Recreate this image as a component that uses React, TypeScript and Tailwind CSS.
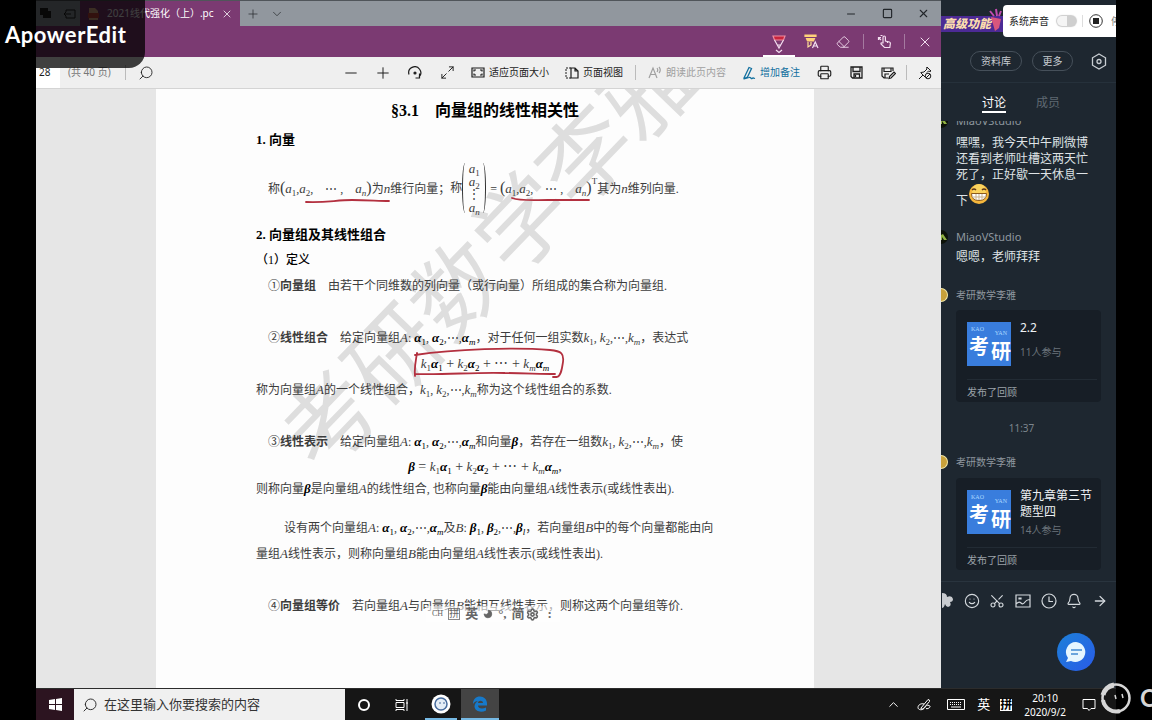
import type { ReactNode } from 'react'
import {
    ArrowRight,
    Bell,
    ChevronDown,
    ChevronUp,
    Clock,
    Eraser,
    Image,
    Maximize2,
    Minus,
    Moon,
    Plus,
    Pointer,
    Printer,
    RotateCw,
    Save,
    Scissors,
    Search,
    Settings,
    Smile,
    Square,
    X,
} from 'lucide-react'

/* Math helpers */
function V({ children, sub, bold }: { children: ReactNode; sub?: string; bold?: boolean }) {
    return (
        <span className={bold ? 'text-[13px] font-bold text-black' : 'text-[13px]'}>
            <i>{children}</i>
            {sub && (
                <sub className="bottom-[-3px] text-[9px] font-normal">{sub === 'm' || sub === 'n' || sub === 'l' ? <i>{sub}</i> : sub}</sub>
            )}
        </span>
    )
}

function Series({ name, last = 'm', bold }: { name: string; last?: string; bold?: boolean }) {
    return (
        <span className="font-[Liberation_Serif,serif]">
            <V sub="1" bold={bold}>{name}</V>, <V sub="2" bold={bold}>{name}</V>,⋯,<V sub={last} bold={bold}>{name}</V>
        </span>
    )
}

function Combination() {
    return (
        <span className="font-[Liberation_Serif,serif]">
            <V sub="1">k</V><V sub="1" bold>α</V> + <V sub="2">k</V><V sub="2" bold>α</V> + ⋯ + <V sub="m">k</V><V sub="m" bold>α</V>
        </span>
    )
}

function RowVector() {
    return (
        <span className="font-[Liberation_Serif,serif]">
            <span className="text-base">(</span>
            <V sub="1">a</V>,<V sub="2">a</V>,&emsp;⋯ ,&emsp;<V sub="n">a</V>
            <span className="text-base">)</span>
        </span>
    )
}

function TitleBar() {
    return (
        <div className="flex h-[26px] items-stretch border-t border-[#50555a] bg-[#91979e] text-[#22262a]">
            <div className="flex w-11 items-center gap-3 pl-1">
                <svg width="11" height="11" viewBox="0 0 11 11"><path d="M0 0h8v3h3v7H3V7H0z" fill="#222" /></svg>
                <svg width="13" height="10" viewBox="0 0 13 10" fill="none" stroke="#222"><path d="M3 3V1h9v8H3V7M1 5h7M3 3L1 5l2 2" /></svg>
            </div>
            <div className="flex w-[160px] items-center gap-2 bg-[#7b3a72] pl-2 text-white">
                <svg width="11" height="12" viewBox="0 0 11 12"><path d="M1 0h6l3 3v9H1z" fill="#e8b38d" /><path d="M0 5h11v5H0z" fill="#c5443a" /></svg>
                <span className="w-[110px] text-[10px] whitespace-nowrap">2021线代强化（上）.pc</span>
                <button aria-label="关闭标签页" className="-ml-1"><X size={12} strokeWidth={1.5} /></button>
            </div>
            <button aria-label="新建标签页" className="px-1.5"><Plus size={14} strokeWidth={1.2} /></button>
            <button aria-label="标签页菜单" className="px-1"><ChevronDown size={14} strokeWidth={1.2} /></button>
            <div className="ml-auto flex">
                <button aria-label="最小化" className="flex w-9 items-center justify-center"><Minus size={12} strokeWidth={2} /></button>
                <button aria-label="最大化" className="flex w-9 items-center justify-center"><Square size={11} strokeWidth={2.5} /></button>
                <button aria-label="关闭" className="flex w-9 items-center justify-center"><X size={13} strokeWidth={2} /></button>
            </div>
        </div>
    )
}

function InkBar() {
    return (
        <div className="flex h-[31px] items-stretch justify-end bg-[#7b3a72] text-[#f3dff0]">
            <button aria-label="笔" className="flex w-8 flex-col items-center justify-end border-b-2 border-white">
                <svg width="14" height="20" viewBox="0 0 14 20" fill="none" stroke="currentColor" strokeWidth="1.2">
                    <path d="M1 1h12l-1.500 4h-9z" fill="#c8243c" stroke="#ef8ba0" />
                    <path d="M2.500 5L7 13l4.500-8M5.500 10h3M4 15l3 2.500L10 15" />
                </svg>
            </button>
            <button aria-label="荧光笔" className="flex w-8 items-center justify-center">
                <svg width="15" height="15" viewBox="0 0 15 15" fill="none" stroke="currentColor" strokeWidth="1.200">
                    <path d="M1 1h11v1.500H1zM2.500 4.500h8l-1 2.500h-6z" fill="#ffd27a" stroke="#ffd27a" />
                    <path d="M4 8v5l3-2V8" stroke="#ffdf9a" />
                    <path d="M8.500 14l2.750-6L14 14M9.500 12h3.500" />
                </svg>
            </button>
            <button aria-label="橡皮擦" className="flex w-8 items-center justify-center"><Eraser size={14} strokeWidth={1.5} /></button>
            <span className="mx-1 my-2 w-px bg-[#a57aa0]" />
            <button aria-label="触摸书写" className="flex w-8 items-center justify-center">
                <svg width="15" height="15" viewBox="0 0 15 15" fill="none" stroke="currentColor" strokeWidth="1.200">
                    <path d="M6 9V3.500q0-1.500 1.200-1.500t1.200 1.500V7l4 1q1 .3 1 1.300l-.6 4.200H7.500L4 10q-.3-1.500 1-1zM10.500 7v2M4 6L1.500 3.500M1.500 6V3.500H4M3.500 1.500h2" />
                </svg>
            </button>
            <span className="mx-1 my-2 w-px bg-[#a57aa0]" />
            <button aria-label="退出书写" className="flex w-8 items-center justify-center"><X size={16} strokeWidth={1.5} /></button>
        </div>
    )
}

const iconButton = 'flex w-8 items-center justify-center'

function PdfToolbar() {
    return (
        <div className="flex h-8 items-stretch border-b border-[#d4d4d4] bg-[#efefef] text-[10px] whitespace-nowrap text-[#1c1c1c]">
            <input aria-label="页码" defaultValue="28" className="w-6 bg-white pl-[3px] text-[10px]" />
            <span className="self-center pl-2 text-[10px] text-[#777]">(共 40 页)</span>
            <span className="my-2 ml-3.5 w-px bg-[#bbb]" />
            <button aria-label="查找" className={iconButton + ' ml-1'}><Search size={16} strokeWidth={1.3} className="-scale-x-100" /></button>
            <div className="ml-auto flex items-stretch">
                <button aria-label="缩小" className={iconButton}><Minus size={18} strokeWidth={1.3} /></button>
                <button aria-label="放大" className={iconButton}><Plus size={18} strokeWidth={1.3} /></button>
                <button aria-label="旋转" className={iconButton}>
                    <svg width="14" height="14" viewBox="0 0 14 14" fill="none" stroke="currentColor" strokeWidth="1.200">
                        <path d="M1 8.500A6 6 0 1 1 11 11M11.500 7.500V12H7.500" /><circle cx="7" cy="7" r="1" fill="currentColor" />
                    </svg>
                </button>
                <button aria-label="全屏" className={iconButton}><Maximize2 size={15} strokeWidth={1.5} /></button>
                <button className="flex items-center gap-1 px-2">
                    <svg width="14" height="11" viewBox="0 0 14 11" fill="none" stroke="currentColor" strokeWidth="1.200">
                        <path d="M1 1h12v9H1zM3 4.500V3h2M9 3h2v1.500M11 6.500V8H9M5 8H3V6.500" />
                    </svg>
                    适应页面大小
                </button>
                <button className="flex items-center gap-1 px-2">
                    <svg width="14" height="12" viewBox="0 0 14 12" fill="none" stroke="currentColor" strokeWidth="1.200">
                        <path d="M6 1H1v10h5" strokeDasharray="2 1" strokeWidth="1" /><path d="M6 1h4l3 3v7H6zM10 1v3h3" />
                    </svg>
                    页面视图
                </button>
                <span className="mx-1 my-2 w-px bg-[#bbb]" />
                <button className="flex items-center gap-1 px-2 text-[#a0a0a0]">
                    <svg width="14" height="13" viewBox="0 0 14 13" fill="none" stroke="currentColor" strokeWidth="1.200">
                        <path d="M1 12L5 2l4 10M2.500 8.500h5M9 2q1.500 2 0 4M11 1q2.500 3 0 6" />
                    </svg>
                    朗读此页内容
                </button>
                <button className="flex items-center gap-1 px-2 text-[#12709f]">
                    <svg width="14" height="14" viewBox="0 0 14 14" fill="none" stroke="currentColor" strokeWidth="1.300">
                        <path d="M2 12L7 1.500l2.500 1L5.500 11 2 12.500zM2 13l5-1.500c2-1 2 2 3 1s1.500-.5 3 0" />
                    </svg>
                    增加备注
                </button>
                <button aria-label="打印" className={iconButton}><Printer size={15} strokeWidth={1.8} /></button>
                <button aria-label="保存" className={iconButton}>
                    <svg width="13" height="13" viewBox="0 0 13 13" fill="none" stroke="currentColor" strokeWidth="1.300">
                        <path d="M1 1h11v11H2.500L1 10.500zM3 1v4.500h7V1M4 12V8h5.500v4M5.500 9v2" />
                    </svg>
                </button>
                <button aria-label="另存为" className={iconButton}>
                    <svg width="15" height="14" viewBox="0 0 15 14" fill="none" stroke="currentColor" strokeWidth="1.200">
                        <path d="M7 12H3L1 10V2h11v3M3 2v3.500h7V2M4 12V8h4M8 12.500l.5-2L13 6l1.500 1.500-4.500 4.500z" />
                    </svg>
                </button>
                <span className="mx-0.5 my-2 w-px bg-[#bbb]" />
                <button aria-label="固定工具栏" className="flex w-8 items-center justify-center">
                    <svg width="14" height="14" viewBox="0 0 14 14" fill="none" stroke="currentColor">
                        <path d="M1 13l4-4M2.500 6.500L7 11M3 6.500l3-.5 3-3-.5-1.500L9 1l4 4-1 .5-1.500-.5L9 6.500" /><circle cx="10" cy="10" r="2.800" /><path d="M8 12l4-4" />
                    </svg>
                </button>
            </div>
        </div>
    )
}

function InputMethodBar() {
    return (
        <div className="absolute top-[517px] left-[270px] flex h-4 w-[134px] items-center gap-[5px] bg-white/60 pl-1.5 text-[13px] font-bold text-[#666]">
            <span className="text-[8px] font-normal">CH</span>
            <span className="border border-[#888] text-[10px] leading-none font-normal">拼</span>
            英
            <Moon size={10} fill="currentColor" className="-scale-x-100" />
            <span>°,</span>
            简
            <Settings size={13} strokeWidth={3} className="-ml-1" />
            <span className="pl-1">:</span>
        </div>
    )
}

function DocumentPage() {
    return (
        <div className="relative ml-[120px] flex-1 overflow-hidden bg-[#fdfdfd] pr-[100px] pl-[100px] font-[Liberation_Serif,Noto_Sans_CJK_SC,serif] text-xs whitespace-nowrap text-[#3c3c3c]">
            <div className="absolute top-[162px] left-1/2 -translate-x-1/2 -translate-y-1/2 -rotate-46 font-[Noto_Sans_CJK_SC,sans-serif] text-[92px] leading-none text-[#dedede]">
                考研数学李雅
            </div>
            <div className="relative">
                <h1 className="pt-2.5 text-center text-base leading-6 font-bold text-black">§3.1　向量组的线性相关性</h1>
                <h2 className="mt-[5px] text-[13px] leading-6 font-bold text-black">1. 向量</h2>
                <div className="flex h-[71px] items-center pl-3">
                    <span>称<RowVector />为<V>n</V>维行向量；</span>
                    <span>称</span>
                    <span className="h-[50px] w-1.5 rounded-[50%] border-l border-[#333]" />
                    <span className="flex flex-col items-center text-center leading-[13px]">
                        <V sub="1">a</V>
                        <V sub="2">a</V>
                        <span>⋮</span>
                        <V sub="n">a</V>
                    </span>
                    <span className="h-[50px] w-1.5 rounded-[50%] border-r border-[#333]" />
                    <span className="pl-1">=&nbsp;<RowVector /><sup className="top-[-9px] text-[9px]">T</sup>其为<V>n</V>维列向量.</span>
                </div>
                <h2 className="text-[13px] leading-6 font-bold text-black">2. 向量组及其线性组合</h2>
                <h3 className="leading-[26px] font-medium text-black">（1）定义</h3>
                <p className="pl-3 leading-[26px]">①<b>向量组</b>　由若干个同维数的列向量（或行向量）所组成的集合称为向量组.</p>
                <p className="mt-[26px] pl-3 leading-[26px]">②<b>线性组合</b>　给定向量组<V>A</V>: <Series name="α" bold />，对于任何一组实数<Series name="k" />，表达式</p>
                <p className="text-center text-sm leading-[26px]"><Combination /></p>
                <p className="leading-[26px]">称为向量组<V>A</V>的一个线性组合，<Series name="k" />称为这个线性组合的系数.</p>
                <p className="mt-[26px] pl-3 leading-[26px]">③<b>线性表示</b>　给定向量组<V>A</V>: <Series name="α" bold />和向量<V bold>β</V>，若存在一组数<Series name="k" />，使</p>
                <p className="text-center text-sm leading-6"><V bold>β</V> = <Combination />,</p>
                <p className="leading-5">则称向量<V bold>β</V>是向量组<V>A</V>的线性组合, 也称向量<V bold>β</V>能由向量组<V>A</V>线性表示(或线性表出).</p>
                <p className="mt-4 pl-7 leading-[26px]">设有两个向量组<V>A</V>: <Series name="α" bold />及<V>B</V>: <Series name="β" last="l" bold />，若向量组<V>B</V>中的每个向量都能由向</p>
                <p className="leading-[26px]">量组<V>A</V>线性表示，则称向量组<V>B</V>能由向量组<V>A</V>线性表示(或线性表出).</p>
                <p className="mt-[26px] pl-3 leading-[26px]">④<b>向量组等价</b>　若向量组<V>A</V>与向量组<V>B</V>能相互线性表示，则称这两个向量组等价.</p>
            </div>
            {/* Pen strokes */}
            <svg className="absolute top-0 left-0" width="658" height="400" fill="none" stroke="#b3303f" strokeWidth="1.800" strokeLinecap="round">
                <path d="M150 113c20 1 30-2 46-2s26 1 37 1" />
                <path d="M356 109c8 3 20 2 36 2h41" />
                <path d="M261 264c-1 7-3 14-2 23M259 266c40-6 100-8 135-5 12 1 14 4 13 12-1 7-2 14-6 15l-4 0M259 285c30 1 60-2 90-1 18 0 35 1 50 1" />
            </svg>
            <InputMethodBar />
        </div>
    )
}

function CourseCard({ title, count }: { title: string; count: string }) {
    return (
        <article className="mr-[15px] ml-[15px] h-[92px] rounded bg-[#171e26] pt-3 pr-1 pl-[11px] text-[10px]">
            <div className="flex h-[58px] gap-[9px] border-b border-[#222b34]">
                <div className="relative h-11 w-11 shrink-0 bg-[#397ddd] font-[Noto_Sans_CJK_SC,sans-serif] text-white">
                    <span className="absolute top-1 left-1 font-[Liberation_Serif,serif] text-[6px] leading-none text-[#a9d8ff]">KAO</span>
                    <span className="absolute top-2 right-1 font-[Liberation_Serif,serif] text-[6px] leading-none text-[#a9d8ff]">YAN</span>
                    <span className="absolute top-3.5 left-0.5 text-xl leading-none font-bold">考</span>
                    <span className="absolute top-[19px] right-0 text-xl leading-none font-bold">研</span>
                </div>
                <div className="-mt-0.5 flex-1">
                    <h4 className="text-xs leading-4 text-[#eef1f4]">{title}</h4>
                    <p className={title.length > 4 ? 'pt-0.5 leading-4 text-[#6b737b]' : 'pt-2 leading-4 text-[#6b737b]'}>{count}</p>
                </div>
            </div>
            <p className="pt-1 leading-4 text-[#9ba2a9]">发布了回顾</p>
        </article>
    )
}

function Sender({ name, gold }: { name: string; gold?: boolean }) {
    return (
        <div className="flex h-4 items-center gap-2 text-[10px] text-[#8f979f]">
            <span className={gold ? 'h-3.5 w-[7px] rounded-r-full border border-l-0 border-[#f5e9a8] bg-[#c9a13a]' : 'h-3.5 w-[7px] rounded-r-full bg-[#0d1208]'}>
                {!gold && (
                    <svg width="7" height="14" viewBox="0 0 7 14"><path d="M0 5l2-1 4 6H3L1 7v3H0z" fill="#8fb043" /></svg>
                )}
            </span>
            <span className={gold ? '' : 'text-[11px]'}>{name}</span>
        </div>
    )
}

function ChatPanel() {
    return (
        <aside className="relative flex w-[175px] shrink-0 flex-col overflow-hidden bg-[#1e2730] text-white">
            <div className="flex h-[46px] items-start">
                <div className="relative mt-4 flex h-4 w-[62px] items-center bg-[#4c2a95] pl-0.5">
                    <span className="text-xs leading-none font-black whitespace-nowrap text-[#fbdcae] italic">高级功能</span>
                    <svg className="absolute -top-2 right-0" width="15" height="24" viewBox="0 0 15 24">
                        <path d="M3 9l10 2-2 9-4 3z" fill="#d9567d" /><path d="M2 3l4 5M8 1l1 7M13 3l-2 5" stroke="#c04bb0" strokeWidth="2" />
                    </svg>
                </div>
                <div className="mt-[5px] flex h-8 flex-1 items-center gap-1 overflow-hidden rounded-l bg-white pl-1.5 text-[10px] whitespace-nowrap text-[#222]">
                    <label htmlFor="system-sound">系统声音</label>
                    <input id="system-sound" type="checkbox" role="switch" className="ml-1 h-2.5 w-[19px] shrink-0 appearance-none rounded-full border-l-[10px] border-[#f5f5f5] bg-[#cfcfcf] shadow-[0_0_1px_1px_#ccc]" />
                    <span className="mx-0.5 h-3 w-px shrink-0 bg-[#ddd]" />
                    <button className="flex items-center gap-2 text-[#777]">
                        <svg width="14" height="14" viewBox="0 0 14 14"><circle cx="7" cy="7" r="6.300" fill="none" stroke="#333" /><path d="M4 4h6v6H4z" fill="#222" /></svg>
                        停
                    </button>
                </div>
            </div>
            <div className="flex h-[37px] items-start border-b border-[#26313b] pt-[5px] pl-[29px] text-[10px] text-[#c9ced3]">
                <button className="h-5 w-[52px] rounded-full border border-[#46505a]">资料库</button>
                <button className="ml-2.5 h-5 w-[41px] rounded-full border border-[#46505a]">更多</button>
                <button aria-label="设置" className="ml-[17px] pt-0.5">
                    <svg width="18" height="17" viewBox="0 0 18 17" fill="none" stroke="currentColor" strokeWidth="1.300">
                        <path d="M9 1l6.500 3.800v7.400L9 16l-6.500-3.800V4.800z" /><circle cx="9" cy="8.500" r="2" />
                    </svg>
                </button>
            </div>
            <nav className="flex gap-[30px] pt-2.5 pl-[41px] text-xs leading-5">
                <button className="h-5 border-b-2 border-white text-white">讨论</button>
                <button className="h-5 text-[#5f6972]">成员</button>
            </nav>
            <div className="flex h-[468px] flex-col overflow-hidden pt-2">
                <div className="h-2 shrink-0 overflow-hidden">
                    <div className="-mt-2"><Sender name="MiaoVStudio" /></div>
                </div>
                <p className="pt-1.5 pl-[15px] text-xs leading-4 text-[#dfe3e6]">
                    嘿嘿，我今天中午刷微博<br />还看到老师吐槽这两天忙<br />死了，正好歇一天休息一<br />
                    <span className="flex items-start">
                        <span className="pt-2.5">下</span>
                        <svg width="22" height="22" viewBox="0 0 22 22">
                            <circle cx="11" cy="11" r="10" fill="#f6b73c" /><circle cx="11" cy="8" r="7" fill="#fbd35e" />
                            <path d="M4 7q2-2 4 0M14 7q2-2 4 0" stroke="#5d3415" strokeWidth="1.500" fill="none" />
                            <path d="M3.500 10.500h15q0 7-7.500 7t-7.500-7z" fill="#fff" stroke="#8c5a1c" /><path d="M4 14h14M8 11v6M11 11v6M14 11v6" stroke="#c9b28d" />
                        </svg>
                    </span>
                </p>
                <div className="pt-5"><Sender name="MiaoVStudio" /></div>
                <p className="pt-1 pl-[15px] text-xs leading-4 text-[#dfe3e6]">嗯嗯，老师拜拜</p>
                <div className="pt-[22px] pb-[7px]"><Sender name="考研数学李雅" gold /></div>
                <CourseCard title="2.2" count="11人参与" />
                <time className="py-[18px] pr-3.5 text-center text-[10px] leading-4 text-[#7c858d]">11:37</time>
                <div className="pb-2"><Sender name="考研数学李雅" gold /></div>
                <CourseCard title="第九章第三节题型四" count="14人参与" />
            </div>
            <div className="flex items-center justify-between border-t border-[#29343e] pt-2.5 pr-2 text-[#d4d9dd]">
                <button aria-label="鲜花"><svg width="13" height="17" viewBox="0 0 11 17"><path d="M0 1q5 0 5 4 5-2 6 2 0 3-3 3 2 4-2 5-2 0-3-3-1 4-3 4z" fill="#c9ccd0" /></svg></button>
                <button aria-label="表情"><Smile size={16} strokeWidth={1.7} /></button>
                <button aria-label="截图"><Scissors size={16} strokeWidth={1.7} className="-rotate-90" /></button>
                <button aria-label="图片">
                    <svg width="16" height="14" viewBox="0 0 16 14" fill="none" stroke="currentColor" strokeWidth="1.200"><path d="M1 1h14v12H1zM1 10q3-3 5-1 2 2 4-1t5-2M4 4h2v1H4z" /></svg>
                </button>
                <button aria-label="历史">
                    <svg width="16" height="16" viewBox="0 0 16 16" fill="none" stroke="currentColor" strokeWidth="1.200"><circle cx="8" cy="8" r="7" /><path d="M8 3.500V8.500h4" /></svg>
                </button>
                <button aria-label="提醒"><Bell size={16} strokeWidth={1.7} /></button>
                <button aria-label="更多工具"><ArrowRight size={16} strokeWidth={1.9} /></button>
            </div>
            <button aria-label="发送消息" className="mt-6 mr-[21px] flex h-[38px] w-[38px] items-center justify-center self-end rounded-full bg-linear-to-br from-[#1d80d8] to-[#2a5ae8]">
                <svg width="24" height="24" viewBox="0 0 24 24"><path d="M12 2a10 10 0 1 1-5 19l-5 1 2-4A10 10 0 0 1 12 2z" fill="#e6f6ff" /><path d="M7 10h11M7 14h7" stroke="#6aa5dd" strokeWidth="1.800" /></svg>
            </button>
        </aside>
    )
}

function Taskbar() {
    return (
        <footer className="flex h-8 items-stretch border-t border-[#2c2c2c] bg-[#161616] text-white">
            <button aria-label="开始" className="flex w-[38px] items-center justify-center bg-[#2c1420]">
                <svg width="13" height="13" viewBox="0 0 13 13"><path d="M0 2l6-1v5H0zM7 1l6-1v6H7zM0 7h6v5l-6-1zM7 7h6v6l-6-1z" fill="#fff" /></svg>
            </button>
            <label className="flex w-[271px] items-center gap-1.5 bg-[#f0f0f0] pl-2 text-[#333]">
                <Search size={16} strokeWidth={1.500} className="-scale-x-100" />
                <input aria-label="搜索" placeholder="在这里输入你要搜索的内容" className="flex-1 text-[13px] placeholder:text-[#333]" />
            </label>
            <button aria-label="Cortana" className="flex w-[38px] items-center justify-center"><span className="h-3 w-3 rounded-full border-2 border-white" /></button>
            <button aria-label="任务视图" className="flex w-[38px] items-center justify-center">
                <svg width="14" height="12" viewBox="0 0 14 12" fill="none" stroke="#fff"><path d="M1 0v1.500h8V0M1 3.500h8v5H1zM1 12v-1.500h8V12M12 0v12M11 4h2" /></svg>
            </button>
            <button aria-label="直播助手" className="mx-1 flex w-8 items-center justify-center border-b-2 border-[#76b9e4]">
                <svg width="20" height="20" viewBox="0 0 20 20"><circle cx="10" cy="10" r="9.500" fill="#fff" /><circle cx="10" cy="10" r="6" fill="#e4edf6" stroke="#456a9c" strokeWidth="1.500" /><path d="M9 8v2M13 8v2" stroke="#456a9c" /></svg>
            </button>
            <button aria-label="Edge" className="flex w-[38px] items-center justify-center border-b-2 border-[#76b9e4] bg-[#444]">
                <svg width="16" height="16" viewBox="0 0 16 16"><path d="M1 8C1 3 4 0.500 8 0.500s7 3 7 7V9.500H6c0 3 4 4 8 2v3C9 17 3 15.500 2.500 10.500 2.500 8 4 6 6 5c-2 0-4 1-5 3zM6 7h5c0-3-5-3-5 0z" fill="#1779c9" /></svg>
            </button>
            <div className="ml-auto flex items-center gap-4 pr-5">
                <button aria-label="显示隐藏的图标"><ChevronUp size={15} strokeWidth={1.5} /></button>
                <button aria-label="Windows Ink">
                    <svg width="14" height="14" viewBox="0 0 14 14" fill="none" stroke="#fff"><path d="M4 10L11 1.500q2 0 1.500 2L6 11H4zM7 6C4 5 1 7 1 9.500s4 3 6 1 2-4 5-3-1 4-3 3" /></svg>
                </button>
                <button aria-label="触摸键盘">
                    <svg width="18" height="11" viewBox="0 0 18 11" fill="none" stroke="#fff"><path d="M.5.5h17v10H.5z" /><path d="M3 3.500h12M3 5.500h12" strokeDasharray="1 1" /><path d="M4 8h10" /></svg>
                </button>
                <div className="-mx-1 flex items-center gap-2.5">
                    <span className="text-[13px]">英</span>
                    <span className="bg-white text-[12px] leading-none font-bold text-black">拼</span>
                </div>
                <time className="text-center text-[10px] leading-[14px]">20:10<br />2020/9/2</time>
                <button aria-label="操作中心">
                    <svg width="14" height="14" viewBox="0 0 14 14" fill="none" stroke="#fff"><path d="M1 1.500h12v9H9L7 12.500 5.500 10.500H1z" /></svg>
                </button>
            </div>
        </footer>
    )
}

export default function App() {
    return (
        <div className="relative flex min-h-screen flex-col overflow-hidden bg-black px-9 font-[Noto_Sans,Noto_Sans_CJK_SC,sans-serif]">
            <div className="flex flex-1">
                <main className="flex min-w-0 flex-1 flex-col bg-[#e6e6e6]">
                    <TitleBar />
                    <InkBar />
                    <PdfToolbar />
                    <div className="flex flex-1 pr-[127px]">
                        <DocumentPage />
                    </div>
                </main>
                <ChatPanel />
            </div>
            <Taskbar />

            {/* Watermarks of the recorder */}
            <div className="absolute top-0 left-0 flex h-[68px] w-[145px] items-center rounded-br-2xl bg-black/75 pl-[5px] font-[Lato,sans-serif] text-[22px] font-bold tracking-wide text-white">
                ApowerEdit
            </div>
            <div className="absolute -right-1 bottom-1.5 flex items-center gap-2 font-[Lato,sans-serif] text-2xl leading-none font-bold text-[#d6d6d6]">
                <svg width="32" height="32" viewBox="0 0 32 32" fill="none" stroke="#d6d6d6">
                    <circle cx="16" cy="16" r="13.500" strokeWidth="2.500" /><path d="M3 18A13.500 13.500 0 0 0 20 29" strokeWidth="4" /><path d="M3 13A13.500 13.500 0 0 1 14 3" strokeWidth="5" /><path d="M15 13l1 4M22 12l1 4" strokeWidth="1.500" />
                </svg>
                C
            </div>
        </div>
    )
}
